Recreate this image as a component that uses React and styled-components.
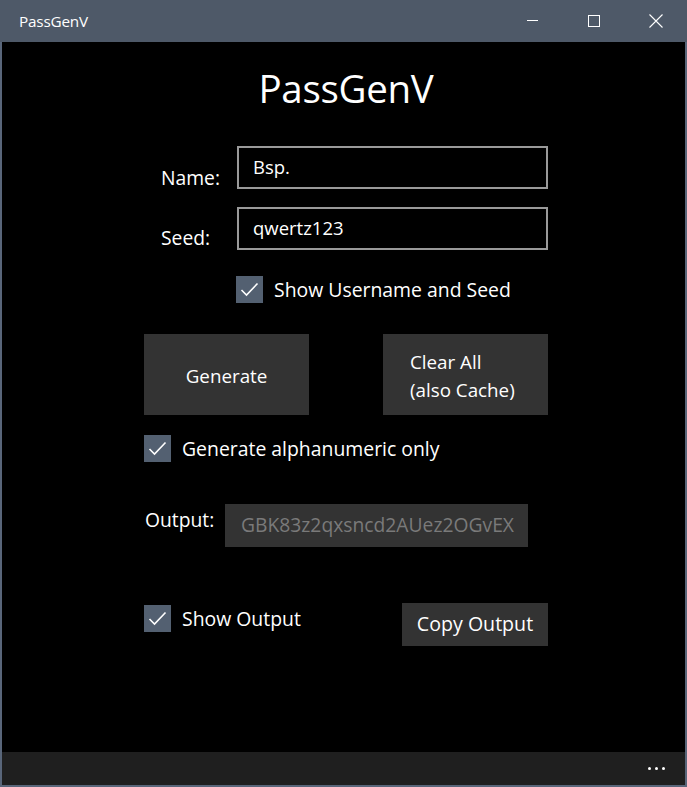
import React from 'react';
import styled, { createGlobalStyle } from 'styled-components';

const GlobalStyle = createGlobalStyle`
  html, body { margin: 0; padding: 0; background: #000; }
  body { font-family: "Open Sans", "Noto Sans", sans-serif; }
`;

const Window = styled.div`
  width: 687px;
  height: 787px;
  box-sizing: border-box;
  display: flex;
  flex-direction: column;
  background: #000;
  border-left: 2px solid #59667a;
  border-right: 2px solid #59667a;
  border-bottom: 2px solid #59667a;
`;

const TitleBar = styled.div`
  height: 42px;
  margin: 0 -2px;
  background: #4e5968;
  display: flex;
  align-items: center;
  color: #fff;
  flex-shrink: 0;
`;

const TitleText = styled.span`
  margin-left: 19px;
  font-size: 15.3px;
  letter-spacing: -0.2px;
  flex: 1;
`;

const WinButton = styled.div`
  width: 62px;
  height: 42px;
  display: flex;
  align-items: center;
  justify-content: center;
`;

const Content = styled.div`
  flex: 1;
  display: flex;
  justify-content: center;
  padding-left: 5px;
`;

const Form = styled.div`
  width: 404px;
  display: flex;
  flex-direction: column;
`;

const Heading = styled.h1`
  margin: 20px 0 0;
  text-align: center;
  font-weight: 400;
  font-size: 38.5px;
  line-height: 52px;
  color: #fff;
  letter-spacing: -0.3px;
`;

const FieldRow = styled.div`
  display: flex;
  margin-top: ${p => p.top}px;
`;

const Label = styled.span`
  width: ${p => p.width}px;
  padding-left: ${p => p.indent || 0}px;
  box-sizing: border-box;
  color: #fff;
  font-size: 19.3px;
  line-height: 20px;
  align-self: ${p => p.align || 'flex-end'};
  margin-top: ${p => p.top || 0}px;
  margin-bottom: ${p => p.bottom || 0}px;
`;

const TextBox = styled.div`
  width: 311px;
  height: 43px;
  box-sizing: border-box;
  border: 2px solid #9a9a9a;
  color: #fff;
  font-size: 18.5px;
  padding: 0 14px;
  display: flex;
  align-items: center;
  padding-bottom: 3px;
`;

const CheckRow = styled.label`
  display: flex;
  align-items: center;
  gap: 11px;
  margin-top: ${p => p.top || 0}px;
  margin-left: ${p => p.indent || 0}px;
  color: #fff;
  font-size: 19.4px;
  line-height: 27px;
`;

const Box = styled.span`
  width: 27px;
  height: 27px;
  background: #536071;
  display: flex;
  align-items: center;
  justify-content: center;
  flex-shrink: 0;
`;

const ButtonRow = styled.div`
  display: flex;
  justify-content: space-between;
  margin-top: 31px;
`;

const BigButton = styled.div`
  width: 165px;
  height: 81px;
  background: #333;
  color: #fff;
  font-size: 18.8px;
  line-height: 28px;
  display: flex;
  flex-direction: column;
  justify-content: center;
  align-items: ${p => (p.left ? 'flex-start' : 'center')};
  padding-left: ${p => (p.left ? 27 : 0)}px;
  padding-top: 2px;
  box-sizing: border-box;
`;

const OutputBox = styled.div`
  width: 303px;
  height: 43px;
  background: #333;
  color: #7a7a7a;
  font-size: 19.3px;
  display: flex;
  align-items: center;
  padding-left: 16px;
  padding-bottom: 2px;
  box-sizing: border-box;
  white-space: nowrap;
  overflow: hidden;
`;

const BottomRow = styled.div`
  display: flex;
  justify-content: space-between;
  align-items: flex-start;
  margin-top: 58px;
`;

const SmallButton = styled.div`
  width: 146px;
  height: 43px;
  background: #333;
  color: #fff;
  font-size: 19.6px;
  display: flex;
  align-items: center;
  justify-content: center;
  padding-bottom: 2px;
  box-sizing: border-box;
  margin-top: -2px;
`;

const AppBar = styled.div`
  height: 33px;
  background: #1f1f1f;
  display: flex;
  justify-content: flex-end;
  align-items: center;
  padding-right: 20px;
  gap: 4px;
  flex-shrink: 0;
`;

const Dot = styled.span`
  width: 3px;
  height: 3px;
  border-radius: 50%;
  background: #fff;
`;

const Check = () => (
  <Box>
    <svg width="19" height="15" viewBox="0 0 19 15" fill="none">
      <path d="M1.5 8 L6.5 13 L17.5 1.5" stroke="#fff" strokeWidth="1.6" />
    </svg>
  </Box>
);

export default function App() {
  return (
    <>
      <GlobalStyle />
      <Window>
        <TitleBar>
          <TitleText>PassGenV</TitleText>
          <WinButton>
            <svg width="11" height="2" viewBox="0 0 11 2">
              <rect width="11" height="1" fill="#fff" />
            </svg>
          </WinButton>
          <WinButton>
            <svg width="12" height="12" viewBox="0 0 12 12">
              <rect x="0.5" y="0.5" width="11" height="11" fill="none" stroke="#fff" />
            </svg>
          </WinButton>
          <WinButton>
            <svg width="14" height="14" viewBox="0 0 14 14">
              <path d="M0.5 0.5 L13.5 13.5 M13.5 0.5 L0.5 13.5" stroke="#fff" strokeWidth="1.1" />
            </svg>
          </WinButton>
        </TitleBar>
        <Content>
          <Form>
            <Heading>PassGenV</Heading>
            <FieldRow top={32}>
              <Label width={93} indent={17} bottom={1}>Name:</Label>
              <TextBox>Bsp.</TextBox>
            </FieldRow>
            <FieldRow top={18}>
              <Label width={93} indent={17} bottom={2}>Seed:</Label>
              <TextBox>qwertz123</TextBox>
            </FieldRow>
            <CheckRow top={26} indent={92}>
              <Check />
              Show Username and Seed
            </CheckRow>
            <ButtonRow>
              <BigButton>Generate</BigButton>
              <BigButton left>
                <span>Clear All</span>
                <span>(also Cache)</span>
              </BigButton>
            </ButtonRow>
            <CheckRow top={20}>
              <Check />
              Generate alphanumeric only
            </CheckRow>
            <FieldRow top={42}>
              <Label width={81} indent={1} align="flex-start" top={6}>Output:</Label>
              <OutputBox>GBK83z2qxsncd2AUez2OGvEX</OutputBox>
            </FieldRow>
            <BottomRow>
              <CheckRow>
                <Check />
                Show Output
              </CheckRow>
              <SmallButton>Copy Output</SmallButton>
            </BottomRow>
          </Form>
        </Content>
        <AppBar>
          <Dot />
          <Dot />
          <Dot />
        </AppBar>
      </Window>
    </>
  );
}
